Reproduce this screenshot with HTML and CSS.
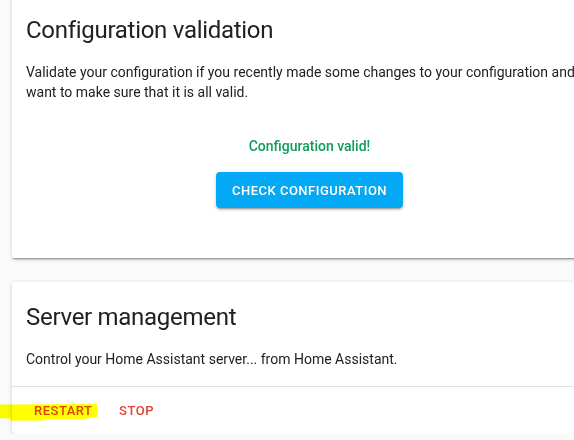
FILE: index.html
```html
<!DOCTYPE html>
<html lang="en">
<head>
<meta charset="utf-8">
<title>Server control</title>
<link rel="stylesheet" href="styles.css">
</head>
<body>
<div class="page">
  <section class="card">
    <h1 class="card-header">Configuration validation</h1>
    <div class="card-content">
      <p class="card-text">Validate your configuration if you recently made some changes to your configuration and want to make sure that it is all valid.</p>
      <div class="validate-result">Configuration valid!</div>
      <div class="validate-actions">
        <button class="btn-raised" type="button">Check configuration</button>
      </div>
    </div>
  </section>

  <section class="card card-server">
    <h1 class="card-header">Server management</h1>
    <div class="card-content">
      <p class="card-text">Control your Home Assistant server... from Home Assistant.</p>
    </div>
    <div class="card-actions">
      <button class="btn-text" type="button">Restart</button>
      <button class="btn-text" type="button">Stop</button>
    </div>
    <svg class="highlight" width="98" height="18" viewBox="0 0 98 18" aria-hidden="true">
      <polygon points="0,0.5 97,0 97.5,13.5 88,14 87,14.8 45,15 44,16.6 11,16.8 10,14.6 0,14.2" fill="#ffff00"/>
    </svg>
  </section>
</div>
</body>
</html>
```
FILE: styles.css
```css
html, body {
  margin: 0;
  padding: 0;
  overflow: hidden;
  background: #fafafa;
}

body {
  font-family: Roboto, "Noto Sans", "Liberation Sans", sans-serif;
  color: #212121;
  -webkit-font-smoothing: antialiased;
}

.page {
  margin-top: -5px;
  padding-left: 12px;
  display: flex;
  flex-direction: column;
  gap: 24px;
  width: 595px;
}

.card {
  position: relative;
  background: #ffffff;
  border-radius: 2px;
  box-shadow: 0 2px 2px 0 rgba(0, 0, 0, 0.14),
              0 1px 5px 0 rgba(0, 0, 0, 0.12),
              0 3px 1px -2px rgba(0, 0, 0, 0.2);
}

.card-header {
  margin: 0;
  padding: 19px 14px 16px;
  font-size: 24px;
  font-weight: 400;
  line-height: 32px;
  letter-spacing: -0.012em;
  color: #212121;
}

.card-content {
  padding: 0 14px 16px;
}

.card-server .card-content {
  padding-bottom: 17px;
}

.card-text {
  margin: 0;
  font-size: 14px;
  line-height: 20px;
}

.validate-result {
  margin-top: 34px;
  text-align: center;
  font-size: 14px;
  line-height: 20px;
  font-weight: 500;
  color: #0f9d58;
}

.validate-actions {
  display: flex;
  justify-content: center;
  padding: 16px 0 34px;
}

.btn-raised {
  height: 36px;
  padding: 0 16px;
  border: none;
  border-radius: 4px;
  background: #03a9f4;
  color: #ffffff;
  font-family: inherit;
  font-size: 13px;
  font-weight: 500;
  letter-spacing: 0.5px;
  text-transform: uppercase;
  box-shadow: 0 3px 1px -2px rgba(0, 0, 0, 0.2),
              0 2px 2px 0 rgba(0, 0, 0, 0.14),
              0 1px 5px 0 rgba(0, 0, 0, 0.12);
}

.card-actions {
  display: flex;
  gap: 4px;
  padding: 5px 14px 5px;
  border-top: 1px solid #e0e0e0;
}

.btn-text {
  height: 36px;
  min-width: 64px;
  padding: 0 8px;
  border: none;
  background: transparent;
  color: #db4437;
  font-family: inherit;
  font-size: 13px;
  font-weight: 500;
  letter-spacing: 0.5px;
  text-transform: uppercase;
}

.highlight {
  position: absolute;
  left: -12px;
  top: 122px;
  mix-blend-mode: multiply;
}
```
